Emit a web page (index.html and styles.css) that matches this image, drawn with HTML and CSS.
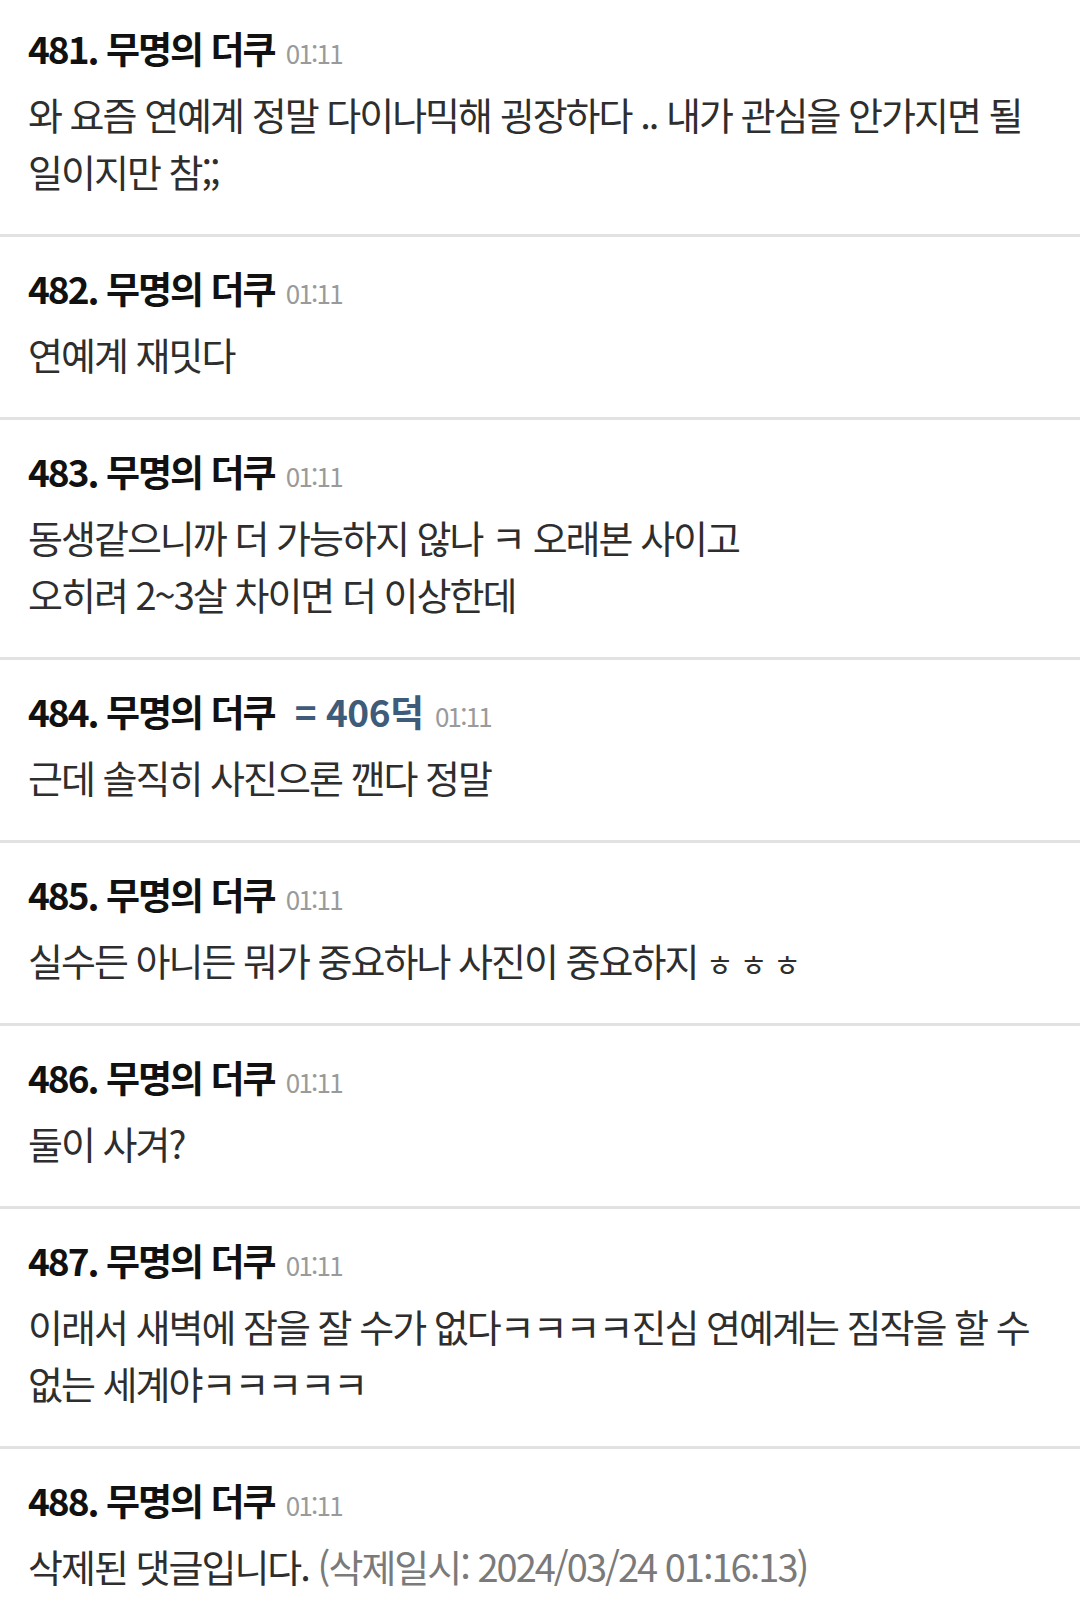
FILE: index.html
```html
<!DOCTYPE html>
<html lang="ko">
<head>
  <meta charset="UTF-8" />
  <meta name="viewport" content="width=device-width, initial-scale=1.0"/>
  <title>무명의 더쿠 댓글</title>
  <link rel="stylesheet" href="styles.css">
</head>
<body>

  <div class="thread">
    <div class="comment">
      <div class="comment-head">481. 무명의 더쿠 <span class="time">01:11</span></div>
      <div class="comment-body">와 요즘 연예계 정말 다이나믹해 굉장하다 .. 내가 관심을 안가지면 될 일이지만 참;;</div>
    </div>

    <div class="comment">
      <div class="comment-head">482. 무명의 더쿠 <span class="time">01:11</span></div>
      <div class="comment-body">연예계 재밋다</div>
    </div>

    <div class="comment">
      <div class="comment-head">483. 무명의 더쿠 <span class="time">01:11</span></div>
      <div class="comment-body">동생같으니까 더 가능하지 않나 ㅋ 오래본 사이고<br>오히려 2~3살 차이면 더 이상한데</div>
    </div>

    <div class="comment">
      <div class="comment-head">484. 무명의 더쿠 <span class="reply-to">= 406덕</span> <span class="time">01:11</span></div>
      <div class="comment-body">근데 솔직히 사진으론 깬다 정말</div>
    </div>

    <div class="comment">
      <div class="comment-head">485. 무명의 더쿠 <span class="time">01:11</span></div>
      <div class="comment-body">실수든 아니든 뭐가 중요하나 사진이 중요하지 <span class="jamo">ㅎㅎㅎ</span></div>
    </div>

    <div class="comment">
      <div class="comment-head">486. 무명의 더쿠 <span class="time">01:11</span></div>
      <div class="comment-body">둘이 사겨?</div>
    </div>

    <div class="comment">
      <div class="comment-head">487. 무명의 더쿠 <span class="time">01:11</span></div>
      <div class="comment-body">이래서 새벽에 잠을 잘 수가 없다ㅋㅋㅋㅋ진심 연예계는 짐작을 할 수 없는 세계야ㅋㅋㅋㅋㅋ</div>
    </div>

    <div class="comment">
      <div class="comment-head">488. 무명의 더쿠 <span class="time">01:11</span></div>
      <div class="comment-body">삭제된 댓글입니다. <span class="deleted">(삭제일시: 2024/03/24 01:16:13)</span></div>
    </div>
  </div>

</body>
</html>
```

FILE: styles.css
```css
body {
  font-family: "Noto Sans CJK KR", "Noto Sans", sans-serif;
  background: #fff;
  color: #2e2e2e;
  margin: 0;
}
.comment {
  padding: 26px 28px 35px;
  border-bottom: 3px solid #e2e2e2;
}
.comment:first-child {
  padding-top: 23px;
}
.comment:last-child {
  border-bottom: none;
}
.comment-head {
  height: 50px;
  font-size: 37px;
  line-height: 50px;
  font-weight: bold;
  letter-spacing: -2px;
  color: #111;
  margin-bottom: 12px;
  white-space: nowrap;
}
.time {
  font-size: 26px;
  line-height: 1;
  font-weight: normal;
  letter-spacing: -1.8px;
  color: #9a9a9a;
  margin-left: 3px;
}
.reply-to {
  color: #3f5b7a;
  letter-spacing: -0.5px;
  margin-left: 12px;
}
.comment-body {
  font-size: 38px;
  line-height: 57px;
  letter-spacing: -2px;
  color: #2e2e2e;
  word-break: keep-all;
}
.jamo {
  font-size: 30px;
  line-height: 1;
  letter-spacing: 6px;
}
.deleted {
  color: #7a7a7a;
}
```
